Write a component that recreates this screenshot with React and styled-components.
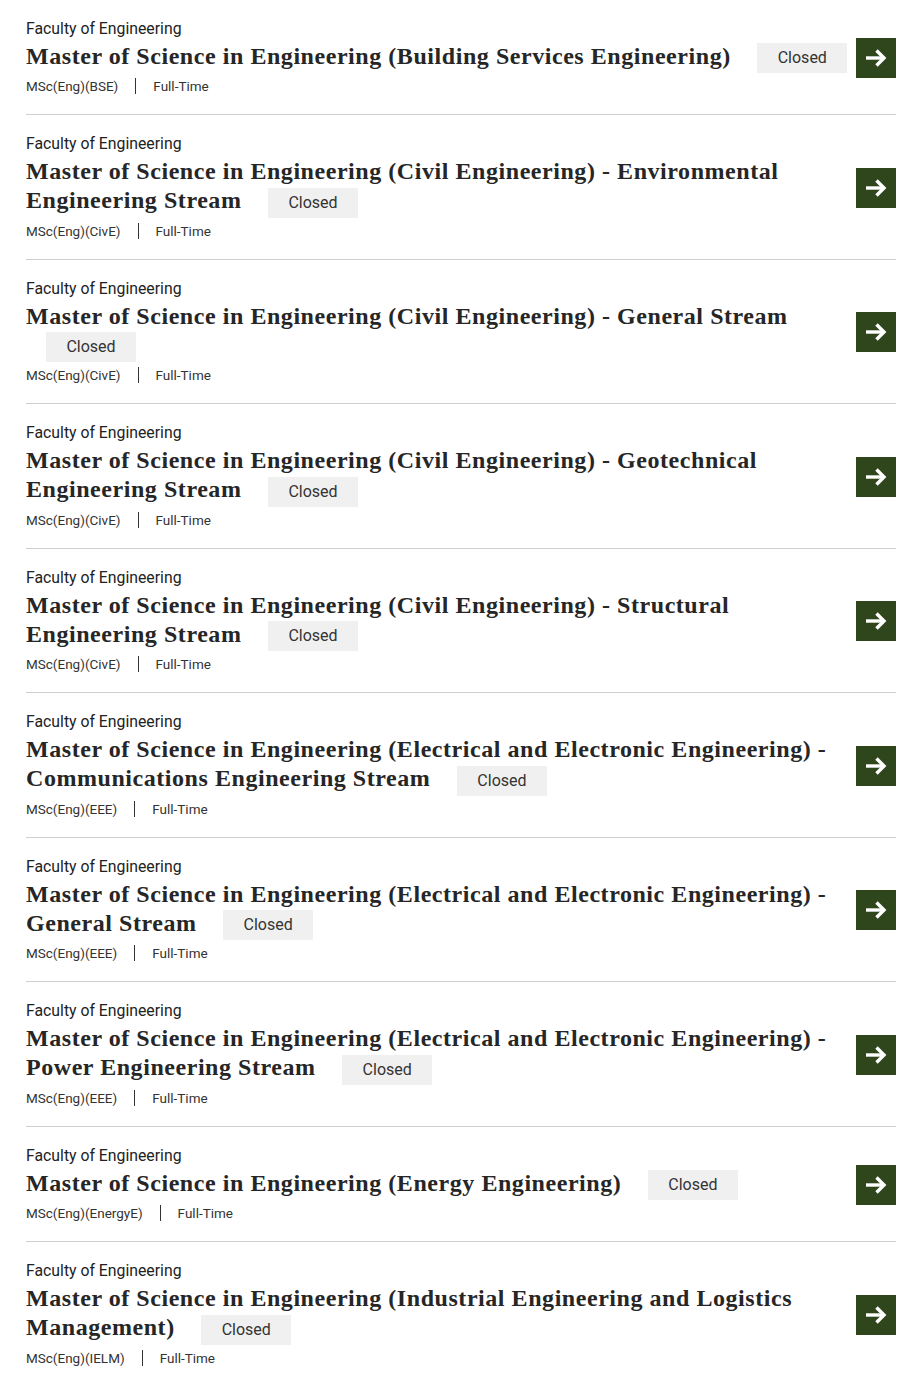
import { createGlobalStyle, styled } from 'styled-components';

const GlobalStyle = createGlobalStyle`
  html, body {
    margin: 0;
    padding: 0;
    background: #fff;
  }
  body {
    font-family: Roboto, "Liberation Sans", sans-serif;
    color: #222;
  }
`

const List = styled.ul`
  list-style: none;
  margin: 0;
  padding: 0 20px 0 26px;
`

const Item = styled.li`
  display: flex;
  align-items: center;
  padding: 18px 0 17px;
  border-bottom: 1px solid #cfcfcf;
`

const Info = styled.div`
  flex: 1;
  min-width: 0;
`

const Faculty = styled.p`
  margin: 0 0 2px;
  font-size: 15.8px;
  line-height: 22px;
  color: #222;
`

const Title = styled.h3`
  margin: 0;
  font-family: "Liberation Serif", serif;
  font-weight: 700;
  font-size: 24px;
  letter-spacing: 0.55px;
  line-height: 29px;
  color: #262626;
`

const Badge = styled.span`
  display: inline-block;
  width: 90px;
  margin: -2px 0 -2px 20px;
  padding: 5px 0;
  background: #f0f0f0;
  font-family: Roboto, "Liberation Sans", sans-serif;
  font-weight: 400;
  font-size: 16px;
  letter-spacing: 0;
  line-height: 20px;
  text-align: center;
  color: #333;
  vertical-align: middle;
`

const Meta = styled.div`
  display: flex;
  align-items: center;
  margin-top: 4px;
  font-size: 13.5px;
  line-height: 22px;
  color: #333;
`

const Divider = styled.span`
  width: 1px;
  height: 16px;
  margin: 0 17px;
  background: #333;
`

const ArrowButton = styled.a`
  display: flex;
  align-items: center;
  justify-content: center;
  flex-shrink: 0;
  width: 40px;
  height: 40px;
  margin-left: 4px;
  background: #2f461d;
  color: #fff;
`

const programmes = [
  { title: 'Master of Science in Engineering (Building Services Engineering)', code: 'MSc(Eng)(BSE)' },
  { title: 'Master of Science in Engineering (Civil Engineering) - Environmental Engineering Stream', code: 'MSc(Eng)(CivE)' },
  { title: 'Master of Science in Engineering (Civil Engineering) - General Stream', code: 'MSc(Eng)(CivE)' },
  { title: 'Master of Science in Engineering (Civil Engineering) - Geotechnical Engineering Stream', code: 'MSc(Eng)(CivE)' },
  { title: 'Master of Science in Engineering (Civil Engineering) - Structural Engineering Stream', code: 'MSc(Eng)(CivE)' },
  { title: 'Master of Science in Engineering (Electrical and Electronic Engineering) - Communications Engineering Stream', code: 'MSc(Eng)(EEE)' },
  { title: 'Master of Science in Engineering (Electrical and Electronic Engineering) - General Stream', code: 'MSc(Eng)(EEE)' },
  { title: 'Master of Science in Engineering (Electrical and Electronic Engineering) - Power Engineering Stream', code: 'MSc(Eng)(EEE)' },
  { title: 'Master of Science in Engineering (Energy Engineering)', code: 'MSc(Eng)(EnergyE)' },
  { title: 'Master of Science in Engineering (Industrial Engineering and Logistics Management)', code: 'MSc(Eng)(IELM)' },
]

function Arrow() {
  return (
    <svg width="24" height="24" viewBox="0 0 24 24" fill="none" stroke="currentColor" strokeWidth="3.4" strokeLinejoin="miter">
      <path d="M2 12H20" />
      <path d="M12.5 4.5L20 12L12.5 19.5" />
    </svg>
  )
}

function App() {
  return (
    <>
      <GlobalStyle />
      <List>
        {programmes.map((p, i) => (
          <Item key={i}>
            <Info>
              <Faculty>Faculty of Engineering</Faculty>
              <Title>
                {p.title} <Badge>Closed</Badge>
              </Title>
              <Meta>
                <span>{p.code}</span>
                <Divider />
                <span>Full-Time</span>
              </Meta>
            </Info>
            <ArrowButton href="#">
              <Arrow />
            </ArrowButton>
          </Item>
        ))}
      </List>
    </>
  )
}

export default App;
